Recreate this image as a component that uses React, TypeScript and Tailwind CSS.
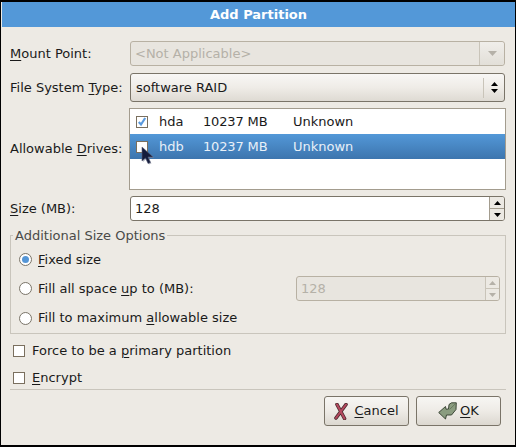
import React from "react";

const U = ({ children }: { children: React.ReactNode }) => (
  <span className="underline decoration-1 underline-offset-[2px]">{children}</span>
);

const Check = ({ checked = false, className = "" }: { checked?: boolean; className?: string }) => (
  <div className={`relative w-[12px] h-[12px] border border-[#7a6f5e] bg-white shrink-0 ${className}`}>
    {checked && (
      <svg viewBox="0 0 10 10" className="absolute left-0 top-0 w-[10px] h-[10px]">
        <path d="M1.8 5 L4 7.5 L8.2 1" fill="none" stroke="#5a9ade" strokeWidth="2.2" />
      </svg>
    )}
  </div>
);

const Radio = ({ on = false }: { on?: boolean }) => (
  <div className="w-[13px] h-[13px] rounded-full border border-[#7a7468] bg-white flex items-center justify-center shrink-0">
    {on && <div className="w-[7px] h-[7px] rounded-full bg-[#5596d6]" />}
  </div>
);

const Tri = ({ up = false, color = "#000", w = 7, h = 4 }: { up?: boolean; color?: string; w?: number; h?: number }) => (
  <svg width={w} height={h} viewBox="0 0 7 4" preserveAspectRatio="none" className="block">
    <path d={up ? "M3.5 0 L7 4 L0 4 Z" : "M0 0 L7 0 L3.5 4 Z"} fill={color} />
  </svg>
);

const Row = ({ label, children, className = "" }: { label: React.ReactNode; children: React.ReactNode; className?: string }) => (
  <div className={`flex items-center ${className}`}>
    <div className="w-[120px] shrink-0 whitespace-nowrap">{label}</div>
    <div className="flex-1 min-w-0">{children}</div>
  </div>
);

const Button = ({ icon, children, gap }: { icon: React.ReactNode; children: React.ReactNode; gap: string }) => (
  <div className={`w-[85px] h-[30px] border border-[#7a7468] rounded-[3px] bg-gradient-to-b from-[#f7f6f3] via-[#eeebe6] to-[#dcd8d0] flex items-center justify-center ${gap}`}>
    {icon}
    <span>{children}</span>
  </div>
);

const DriveRow = ({ name, checked, selected }: { name: string; checked?: boolean; selected?: boolean }) => (
  <div className={`h-[25px] flex items-center ${selected ? "bg-gradient-to-b from-[#5398d8] to-[#3d75ae] text-[#e8f0f8]" : ""}`}>
    <Check checked={checked} className="ml-[6px]" />
    <span className="ml-[11px] w-[44px]">{name}</span>
    <span className="w-[90px] tracking-[-0.15px]">10237 MB</span>
    <span>Unknown</span>
  </div>
);

export default function App() {
  return (
    <div
      className="w-[516px] h-[447px] bg-[#edeae4] border-t-2 border-l border-r border-b-2 border-black text-[13px] leading-[16px] text-[#1a1a1a] overflow-hidden"
      style={{ fontFamily: '"DejaVu Sans", sans-serif' }}
    >
      <div className="h-[25px] ml-[1px] bg-[#5398d8] text-white font-bold flex items-center justify-center">Add Partition</div>

      <div className="pl-[9px] pr-[10px]">
        <Row label={<span><U>M</U>ount Point:</span>} className="mt-[14px]">
          <div className="h-[25px] border border-[#b8b1a3] rounded-[3px] bg-[#e8e5df] flex items-stretch">
            <div className="flex-1 pl-[4px] text-[#b5b1a8] flex items-center">&lt;Not Applicable&gt;</div>
            <div className="w-[25px] border-l border-[#c9c4b9] rounded-r-[3px] bg-gradient-to-b from-[#f0eeea] to-[#e2dfd8] flex items-center justify-center">
              <Tri color="#b5b1a8" w={9} h={5} />
            </div>
          </div>
        </Row>

        <Row label={<span>File System <U>T</U>ype:</span>} className="mt-[7px]">
          <div className="h-[29px] border border-[#7a7468] rounded-[3px] bg-gradient-to-b from-[#f8f7f5] via-[#efece7] to-[#dedad3] flex items-center">
            <div className="flex-1 pl-[5px]">software RAID</div>
            <div className="w-px h-[20px] bg-[#c9c4b9]" />
            <div className="w-[20px] flex flex-col items-center gap-[3px] pl-[1px]">
              <Tri up />
              <Tri />
            </div>
          </div>
        </Row>

        <Row label={<span>Allowable <U>D</U>rives:</span>} className="mt-[6px]">
          <div className="relative h-[82px] w-[377px] -ml-[1px] border border-[#a39c8e] bg-white">
            <DriveRow name="hda" checked />
            <DriveRow name="hdb" selected />
            <svg width="14" height="19" viewBox="0 0 14 19" className="absolute left-[11px] top-[37px]">
              <path d="M2 2 L2 16 L5.5 13 L8 18.5 L10.5 17.5 L8 12 L13 12 Z" fill="#8a8e9c" opacity="0.55" />
              <path d="M1 1 L1 15 L4.5 12 L7 17.5 L9.5 16.5 L7 11 L12 11 Z" fill="#141c3c" stroke="#5a6078" strokeWidth="0.6" />
            </svg>
          </div>
        </Row>

        <Row label={<span><U>S</U>ize (MB):</span>} className="mt-[6px]">
          <div className="h-[25px] border border-[#7a7468] rounded-[3px] bg-white flex items-stretch overflow-hidden">
            <div className="flex-1 pl-[4px] flex items-center">128</div>
            <div className="w-[15px] border-l border-[#a39c8e] bg-[#ece9e3] flex flex-col">
              <div className="flex-1 flex items-center justify-center border-b border-[#a39c8e]"><Tri up w={7} h={4} /></div>
              <div className="flex-1 flex items-center justify-center"><Tri w={7} h={4} /></div>
            </div>
          </div>
        </Row>

        <div className="relative mt-[14px] h-[99px] w-[496px] border border-[#c9c5bc] pl-[8px] pr-[5px] pt-[9px]">
          <div className="absolute left-[2px] -top-[8px] bg-[#edeae4] px-[2px] text-[#4a4a48]">Additional Size Options</div>
          <div className="h-[29px] flex items-center gap-[6px]">
            <Radio on />
            <span><U>F</U>ixed size</span>
          </div>
          <div className="h-[29px] flex items-center gap-[6px]">
            <Radio />
            <span className="flex-1">Fill all space <U>u</U>p to (MB):</span>
            <div className="h-[25px] w-[204px] border border-[#b8b1a3] rounded-[3px] bg-[#e8e5df] flex items-stretch overflow-hidden">
              <div className="flex-1 pl-[4px] text-[#b5b1a8] flex items-center">128</div>
              <div className="w-[14px] border-l border-[#c9c4b9] bg-[#ece9e3] flex flex-col">
                <div className="flex-1 flex items-center justify-center border-b border-[#c9c4b9]"><Tri up w={7} h={4} color="#b5b1a8" /></div>
                <div className="flex-1 flex items-center justify-center"><Tri w={7} h={4} color="#b5b1a8" /></div>
              </div>
            </div>
          </div>
          <div className="h-[30px] flex items-center gap-[6px]">
            <Radio />
            <span>Fill to maximum <U>a</U>llowable size</span>
          </div>
        </div>

        <div className="flex items-center gap-[7px] ml-[3px] h-[16px] mt-[9px]">
          <Check />
          <span>Force to be a <U>p</U>rimary partition</span>
        </div>
        <div className="flex items-center gap-[7px] ml-[3px] h-[16px] mt-[11px]">
          <Check />
          <span><U>E</U>ncrypt</span>
        </div>

        <div className="h-px bg-[#c9c5bc] mt-[3px] mr-[-1px]" />

        <div className="flex justify-end gap-[7px] mt-[6px] pr-[4px]">
          <Button
            gap="gap-[6px]"
            icon={
              <svg width="14" height="17" viewBox="0 0 14 17">
                <path d="M3 1.5 L10.5 15.5 M12 1.5 L2 15" fill="none" stroke="#4a2a2e" strokeWidth="3.6" strokeLinecap="round" />
                <path d="M3 1.5 L10.5 15.5 M12 1.5 L2 15" fill="none" stroke="#b5495f" strokeWidth="2" strokeLinecap="round" />
              </svg>
            }
          >
            <U>C</U>ancel
          </Button>
          <Button
            gap="gap-[3px]"
            icon={
              <svg width="19" height="18" viewBox="0 0 19 18">
                <path d="M0.7 10.5 L7.5 4.5 L8 7.2 L10.5 7 L11 2.5 L13.5 0.8 L18.3 0.8 L18 7.5 L13.5 13 L8.5 13 L7.5 17 Z" fill="#8a9c7f" stroke="#2f3a2a" strokeWidth="0.9" strokeLinejoin="round" />
                <path d="M11.5 7.5 L18 1.2" stroke="#5e6e54" strokeWidth="0.8" fill="none" />
              </svg>
            }
          >
            <U>O</U>K
          </Button>
        </div>
      </div>
    </div>
  );
}
